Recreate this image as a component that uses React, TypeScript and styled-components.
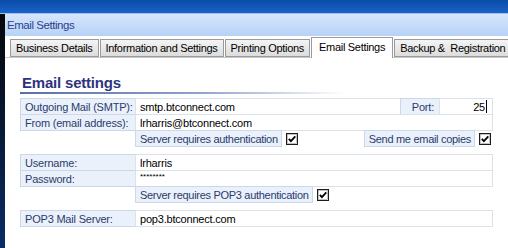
import styled, { createGlobalStyle } from "styled-components";

const Global = createGlobalStyle`
  html, body {
    margin: 0;
    padding: 0;
    background: #ffffff;
    overflow: hidden;
  }
  body {
    font-family: "Liberation Sans", Arial, sans-serif;
  }
`;

const Page = styled.div`
  width: 508px;
  height: 248px;
  display: flex;
  flex-direction: column;
  background: #fff;
  overflow: hidden;
`;

const TopBar = styled.div`
  height: 13px;
  background: linear-gradient(#0a4ca8, #1a62c8);
  border-bottom: 1px solid #9fc0ee;
`;

const Body = styled.div`
  flex: 1;
  display: flex;
  min-width: 0;
`;

const SideStrip = styled.div`
  width: 5px;
  flex: none;
  background: linear-gradient(#050608, #0b2c66);
`;

const Main = styled.div`
  flex: 1;
  min-width: 0;
  display: flex;
  flex-direction: column;
`;

const TitleBar = styled.div`
  height: 22px;
  display: flex;
  align-items: center;
  padding-left: 2px;
  font-size: 11.5px;
  letter-spacing: -0.45px;
  color: #2c3f93;
  background: linear-gradient(#d7e6fb, #b7d2f6);
`;

const TabStrip = styled.div`
  display: flex;
  align-items: flex-end;
  height: 21px;
  padding-left: 5px;
  border-bottom: 1px solid #c8c8c8;
`;

const Tab = styled.div<{ $active?: boolean }>`
  height: ${(p) => (p.$active ? "21px" : "18px")};
  padding: ${(p) => (p.$active ? "0 7px 3px 7px" : "0 5px")};
  margin-bottom: ${(p) => (p.$active ? "-1px" : "0")};
  display: flex;
  align-items: center;
  flex: none;
  box-sizing: border-box;
  font-size: 11px;
  letter-spacing: -0.3px;
  color: #000;
  white-space: pre;
  border: 1px solid #9a9a9a;
  border-bottom: ${(p) => (p.$active ? "none" : "1px solid #9a9a9a")};
  margin-right: 1px;
  background: ${(p) => (p.$active ? "#ffffff" : "linear-gradient(#f4f4f4, #dcdcdc)")};
`;

const Content = styled.div`
  padding: 13px 0 0 15px;
  display: flex;
  flex-direction: column;
`;

const Heading = styled.div`
  font-weight: bold;
  font-size: 15px;
  letter-spacing: -0.2px;
  color: #2e337e;
  padding-left: 2px;
  height: 20px;
  display: flex;
  align-items: flex-end;
`;

const Rule = styled.div`
  height: 2px;
  width: 326px;
  margin-top: 1px;
  background: linear-gradient(90deg, #5a6fa8, #8ea2cc 55%, rgba(220, 228, 242, 0));
`;

const Form = styled.div`
  margin-top: 4px;
  width: 472px;
  display: flex;
  flex-direction: column;
`;

const Group = styled.div`
  display: flex;
  flex-direction: column;
  margin-bottom: 8px;
`;

const Row = styled.div`
  display: flex;
  height: 16px;
`;

const Cell = styled.div<{ $w?: number; $label?: boolean; $right?: boolean }>`
  width: ${(p) => (p.$w ? `${p.$w}px` : "auto")};
  flex: ${(p) => (p.$w ? "none" : "1")};
  min-width: 0;
  height: 17px;
  margin: 0 -1px -1px 0;
  box-sizing: border-box;
  display: flex;
  align-items: center;
  justify-content: ${(p) => (p.$right ? "flex-end" : "flex-start")};
  padding: 0 ${(p) => (p.$right ? "5px" : "3px")} 0 4px;
  font-size: 11px;
  letter-spacing: -0.2px;
  color: ${(p) => (p.$label ? "#2b3b6e" : "#000")};
  background: ${(p) => (p.$label ? "#eaf1fb" : "#fff")};
  border: 1px solid ${(p) => (p.$label ? "#ccd7e7" : "#dbe1e9")};
  white-space: nowrap;
`;

const Blank = styled.div<{ $w: number }>`
  width: ${(p) => p.$w}px;
  flex: none;
`;

const Fill = styled.div`
  flex: 1;
`;

const CheckLabel = styled.div`
  height: 17px;
  box-sizing: border-box;
  display: flex;
  align-items: center;
  padding: 0 3px 0 4px;
  font-size: 11px;
  letter-spacing: -0.3px;
  color: #2b3b6e;
  background: #eaf1fb;
  border: 1px solid #ccd7e7;
  white-space: nowrap;
`;

const CheckWrap = styled.div`
  display: flex;
  align-items: center;
  padding: 0 1px 0 4px;
  height: 17px;
`;

const Caret = styled.span`
  display: inline-block;
  width: 1px;
  height: 13px;
  background: #000;
  margin-left: 1px;
`;

const Dots = styled.span`
  font-size: 8px;
  letter-spacing: 0px;
  position: relative;
  top: -2px;
`;

function Check() {
  return (
    <svg width="12" height="12" viewBox="0 0 12 12">
      <rect x="0.5" y="0.5" width="11" height="11" fill="#fff" stroke="#1c1c1c" />
      <rect x="1.5" y="1.5" width="9" height="9" fill="none" stroke="#9a9a9a" strokeWidth="0.6" />
      <path d="M2.8 5.8 L4.9 8.2 L9.3 3.4" fill="none" stroke="#000" strokeWidth="1.8" />
    </svg>
  );
}

function CheckOption({ label }: { label: string }) {
  return (
    <>
      <CheckLabel>{label}</CheckLabel>
      <CheckWrap>
        <Check />
      </CheckWrap>
    </>
  );
}

const tabs = [
  "Business Details",
  "Information and Settings",
  "Printing Options",
  "Email Settings",
  "Backup &  Registration",
];

export default function App() {
  return (
    <>
      <Global />
      <Page>
        <TopBar />
        <Body>
          <SideStrip />
          <Main>
            <TitleBar>Email Settings</TitleBar>
            <TabStrip>
              {tabs.map((t) => (
                <Tab key={t} $active={t === "Email Settings"}>
                  {t}
                </Tab>
              ))}
            </TabStrip>
            <Content>
              <Heading>Email settings</Heading>
              <Rule />
              <Form>
                <Group>
                  <Row>
                    <Cell $w={116} $label>Outgoing Mail (SMTP):</Cell>
                    <Cell>smtp.btconnect.com</Cell>
                    <Cell $w={40} $label $right>Port:</Cell>
                    <Cell $w={54} $right>
                      25
                      <Caret />
                    </Cell>
                  </Row>
                  <Row>
                    <Cell $w={116} $label>From (email address):</Cell>
                    <Cell>lrharris@btconnect.com</Cell>
                  </Row>
                  <Row>
                    <Blank $w={115} />
                    <CheckOption label="Server requires authentication" />
                    <Fill />
                    <CheckOption label="Send me email copies" />
                  </Row>
                </Group>
                <Group>
                  <Row>
                    <Cell $w={116} $label>Username:</Cell>
                    <Cell>lrharris</Cell>
                  </Row>
                  <Row>
                    <Cell $w={116} $label>Password:</Cell>
                    <Cell>
                      <Dots>********</Dots>
                    </Cell>
                  </Row>
                  <Row>
                    <Blank $w={115} />
                    <CheckOption label="Server requires POP3 authentication" />
                    <Fill />
                  </Row>
                </Group>
                <Group>
                  <Row>
                    <Cell $w={116} $label>POP3 Mail Server:</Cell>
                    <Cell>pop3.btconnect.com</Cell>
                  </Row>
                </Group>
              </Form>
            </Content>
          </Main>
        </Body>
      </Page>
    </>
  );
}
